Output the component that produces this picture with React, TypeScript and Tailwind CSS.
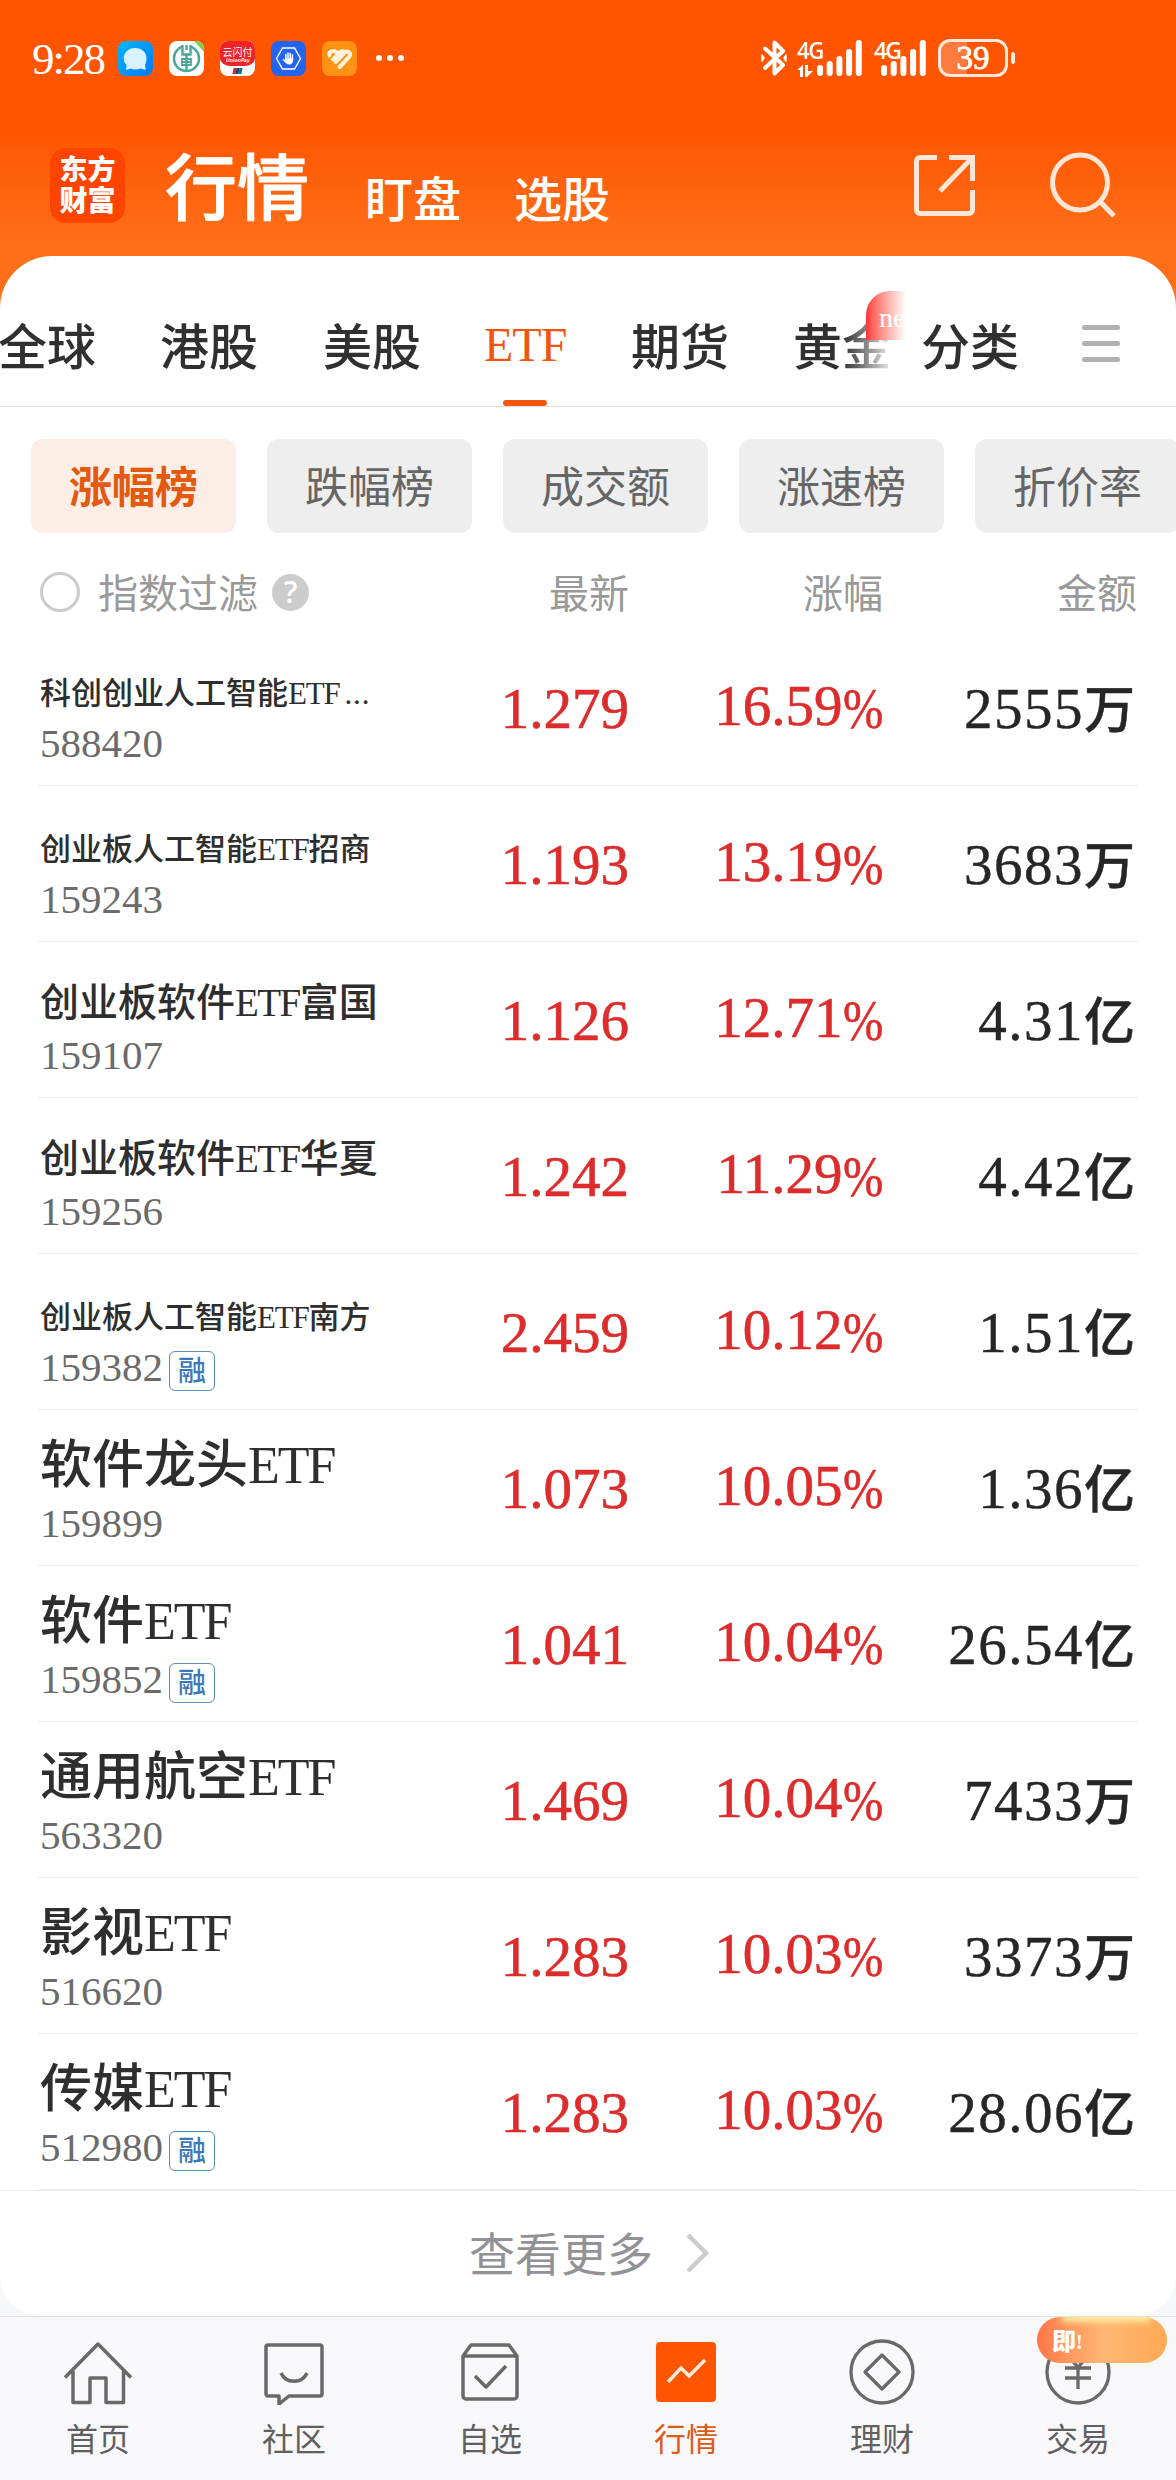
import React from 'react';
import clsx from 'clsx';

interface Fund {
  name: string;
  code: string;
  price: string;
  change: string;
  amount: string;
  unit: string;
  size: 'sm' | 'md' | 'lg';
  margin?: boolean;
}

const funds: Fund[] = [
  { name: '科创创业人工智能ETF...', code: '588420', price: '1.279', change: '16.59', amount: '2555', unit: '万', size: 'sm' },
  { name: '创业板人工智能ETF招商', code: '159243', price: '1.193', change: '13.19', amount: '3683', unit: '万', size: 'sm' },
  { name: '创业板软件ETF富国', code: '159107', price: '1.126', change: '12.71', amount: '4.31', unit: '亿', size: 'md' },
  { name: '创业板软件ETF华夏', code: '159256', price: '1.242', change: '11.29', amount: '4.42', unit: '亿', size: 'md' },
  { name: '创业板人工智能ETF南方', code: '159382', price: '2.459', change: '10.12', amount: '1.51', unit: '亿', size: 'sm', margin: true },
  { name: '软件龙头ETF', code: '159899', price: '1.073', change: '10.05', amount: '1.36', unit: '亿', size: 'lg' },
  { name: '软件ETF', code: '159852', price: '1.041', change: '10.04', amount: '26.54', unit: '亿', size: 'lg', margin: true },
  { name: '通用航空ETF', code: '563320', price: '1.469', change: '10.04', amount: '7433', unit: '万', size: 'lg' },
  { name: '影视ETF', code: '516620', price: '1.283', change: '10.03', amount: '3373', unit: '万', size: 'lg' },
  { name: '传媒ETF', code: '512980', price: '1.283', change: '10.03', amount: '28.06', unit: '亿', size: 'lg', margin: true },
];

const nameSize = {
  sm: 'text-[31px] leading-[36px]',
  md: 'text-[39px] leading-[42px]',
  lg: 'text-[52px] leading-[52px]',
};

function SignalBars() {
  return (
    <svg width="45" height="36" viewBox="0 0 45 36" fill="white">
      <rect x="0" y="25" width="6" height="11" rx="3" />
      <rect x="9.7" y="21" width="6" height="15" rx="3" />
      <rect x="19.4" y="16" width="6" height="20" rx="3" />
      <rect x="29.1" y="9" width="6" height="27" rx="3" />
      <rect x="38.8" y="0" width="6" height="36" rx="3" />
    </svg>
  );
}

function StatusBar() {
  return (
    <div className="flex h-[116px] items-center pl-[32px] text-white">
      <span className="w-[86px] pt-[3px] text-[45px] leading-none tracking-[-2px]">9:28</span>
      <div className="flex items-center gap-4">
        <svg width="35" height="35" viewBox="0 0 35 35">
          <defs>
            <linearGradient id="chat" x1="0" y1="0" x2="1" y2="1">
              <stop offset="0" stopColor="#00b7ff" />
              <stop offset="1" stopColor="#0678f5" />
            </linearGradient>
          </defs>
          <rect width="35" height="35" rx="8" fill="url(#chat)" />
          <path d="M17 7c7 0 11.500 4.500 11.500 10.500 0 3-.8 5-1.500 6.500l.8 5-5.500-1.500c-4 1.500-7 1-9.500 0L8 29l.7-5C6.500 22 5.700 20 5.700 17.500 5.700 11.500 10.500 7 17 7z" fill="#d9f2ff" />
        </svg>
        <svg width="35" height="35" viewBox="0 0 35 35">
          <rect width="35" height="35" rx="8" fill="white" />
          <path d="M25 0h2a8 8 0 0 1 8 8v3z" fill="#7ed04b" />
          <circle cx="17.500" cy="17.500" r="12.500" fill="none" stroke="#4ba899" strokeWidth="2.600" />
          <path d="M17.500 2v8" stroke="white" strokeWidth="9" />
          <path d="M13.500 4v9.500h8V4M17.500 13.500V30M17.500 4v5" fill="none" stroke="#4ba899" strokeWidth="2.400" />
          <path d="M13 18h9v6h-9zM13 21h9" fill="none" stroke="#4ba899" strokeWidth="1.800" />
        </svg>
        <div className="flex h-[35px] w-[35px] flex-col items-center overflow-hidden rounded-lg bg-white">
          <div className="flex h-[25px] w-full shrink-0 flex-col items-center rounded-b-[30%] bg-[#ee2229] pt-[5px] font-['Noto_Sans_CJK_SC',sans-serif]">
            <span className="text-[10px] leading-[11px]">云闪付</span>
            <span className="text-[5px] leading-[6px] font-bold italic">UnionPay</span>
          </div>
          <div className="mt-[2px] flex h-[6px] -skew-x-12">
            <i className="w-[3px] bg-[#d8232a]" />
            <i className="w-[3px] bg-[#1d3d7c]" />
            <i className="w-[3px] bg-[#0b7a77]" />
          </div>
        </div>
        <svg width="35" height="35" viewBox="0 0 35 35">
          <rect width="35" height="35" rx="8" fill="#2364f3" />
          <path d="M11.500 7h12l6 10.500-6 10.500h-12l-6-10.500z" fill="none" stroke="white" strokeWidth="1.300" />
          <path d="M14.800 18v-4.500M17 18v-6M19.200 18v-5.500M21.400 18v-4" stroke="white" strokeWidth="1.500" strokeLinecap="round" />
          <path d="M14 17.500h8.200c.2 3.500-1.200 6-3.700 6-2.800 0-4.500-2-7-5 .8-.8 1.700-.4 2.500.5z" fill="white" />
        </svg>
        <svg width="35" height="35" viewBox="0 0 35 35">
          <rect width="35" height="35" rx="8" fill="#ff9212" />
          <g fill="none" stroke="#fff3dd" strokeWidth="4" strokeLinecap="round">
            <path d="M7.500 14.500c-1-4 4-6 7-3M11 18.500l7-7.500c3-2.500 5 .5 3 2.500L14 21" />
            <path d="M17.500 26 27 16c3-4-1.500-7-5-4.500" />
          </g>
        </svg>
      </div>
      <div className="ml-[19px] flex gap-[5px]">
        <i className="size-[6px] rounded-full bg-white" />
        <i className="size-[6px] rounded-full bg-white" />
        <i className="size-[6px] rounded-full bg-white" />
      </div>
      <svg className="ml-[357px]" width="26" height="36" viewBox="0 0 26 36" fill="none" stroke="white" strokeWidth="4" strokeLinejoin="round" strokeLinecap="round">
        <path d="M4 8.500 22 25l-8.500 8.500v-31L22 11 4 28" />
        <path d="M1 15v6l2-3zM25 15v6l-2-3z" strokeWidth="1.500" fill="white" />
      </svg>
      <div className="ml-[10px] flex h-[36px] items-start">
        <div className="flex w-[20px] flex-col">
          <span className="origin-left scale-x-[0.92] font-['Open_Sans',sans-serif] text-[24px] leading-[20px] font-semibold tracking-[-1.500px]">4G</span>
          <svg className="mt-[5px]" width="17" height="12" viewBox="0 0 17 12" fill="white">
            <path d="M0 5 6 0v12H3V5zM8 0h3v6h5l-6 6H8z" />
          </svg>
        </div>
        <SignalBars />
      </div>
      <div className="ml-[12px] flex h-[36px] items-start">
        <span className="w-[7px] origin-left font-['Open_Sans',sans-serif] text-[23px] leading-[20px] font-semibold tracking-[-2px]">4G</span>
        <SignalBars />
      </div>
      <div className="ml-[12px] flex h-[38px] w-[70px] items-center justify-center rounded-xl border-[3px] border-[#ffeadb] bg-[linear-gradient(90deg,#ff7b3d_40%,transparent_40%)] text-[33px] leading-none [-webkit-text-stroke:0.800px]">
        39
      </div>
      <i className="ml-[3px] h-[12px] w-[4px] rounded-full bg-[#ffeadb]" />
    </div>
  );
}

function Header() {
  return (
    <div className="flex h-[140px] pl-[50px] text-white">
      <div className="mt-[32px] flex size-[75px] flex-col items-center justify-center rounded-2xl bg-[#ff4400] text-[28px] leading-[31px] font-black">
        <span>东方</span>
        <span>财富</span>
      </div>
      <span className="mt-[38px] ml-[40px] text-[72px] leading-[72px] font-medium [-webkit-text-stroke:0.800px]">行情</span>
      <span className="mt-[61px] ml-[56px] text-[48px] leading-[48px] font-medium">盯盘</span>
      <span className="mt-[61px] ml-[53px] text-[48px] leading-[48px] font-medium">选股</span>
      <svg className="mt-[39px] ml-[304px]" width="61" height="61" viewBox="0 0 61 61" fill="none" stroke="#ffe6d6" strokeWidth="5">
        <path d="M23 2.500H6a3.500 3.500 0 0 0-3.500 3.500v49A3.500 3.500 0 0 0 6 58.500h49a3.500 3.500 0 0 0 3.500-3.500V35M35 2.500h23.500V26M57 4 26 36" />
      </svg>
      <svg className="mt-[36px] ml-[75px]" width="67" height="67" viewBox="0 0 67 67" fill="none" stroke="#ffe6d6" strokeWidth="5">
        <circle cx="30" cy="30.500" r="27.500" />
        <path d="M50 49.500 64 64" />
      </svg>
    </div>
  );
}

function Tabs() {
  return (
    <div className="flex h-[151px] shrink-0 border-b border-[#dedede] pt-[68px] text-[49px] leading-[50px] font-medium whitespace-nowrap text-[#303030]">
      <span className="-ml-[2px] w-[162px]">全球</span>
      <span className="w-[163px]">港股</span>
      <span className="w-[161px]">美股</span>
      <div className="relative -mt-[4px] w-[147px] text-[#f0560f]">
        <span className="text-[48px] tracking-[-1px]">ETF</span>
        <i className="absolute top-[80px] left-[19px] h-[6px] w-[44px] rounded-full bg-[#f5560d]" />
      </div>
      <span className="w-[162px]">期货</span>
      <div className="relative w-[128px]">
        <span className="bg-linear-to-r from-[#303030] from-50% to-[#d8d8d8] to-95% bg-clip-text text-transparent">黄金</span>
        <div className="absolute -top-[33px] left-[73px] h-[49px] w-[40px] overflow-hidden rounded-tl-[24px] bg-linear-to-r from-[#ff3038] to-white pl-[13px] text-[28px] leading-[54px] font-normal text-white">
          new
        </div>
      </div>
      <span className="w-[161px]">分类</span>
      <div className="mt-[1px] flex h-[37px] w-[38px] flex-col justify-between">
        <i className="h-[5px] rounded-full bg-[#b0b0b0]" />
        <i className="h-[5px] rounded-full bg-[#b0b0b0]" />
        <i className="h-[5px] rounded-full bg-[#b0b0b0]" />
      </div>
    </div>
  );
}

function Chips() {
  return (
    <div className="flex gap-[31px] overflow-hidden pt-[32px] pl-[31px]">
      {['涨幅榜', '跌幅榜', '成交额', '涨速榜', '折价率'].map((label, i) => (
        <div
          key={label}
          className={clsx(
            'flex h-[94px] w-[205px] shrink-0 items-center justify-center rounded-xl pt-[7px] text-[43px]',
            i === 0 ? 'bg-[#fdeee5] font-bold text-[#e2590f]' : 'bg-[#eeeeee] text-[#666666]',
          )}
        >
          {label}
        </div>
      ))}
    </div>
  );
}

function ListHeader() {
  return (
    <div className="flex h-[97px] items-center pt-[21px] pl-[40px] text-[40px] leading-none text-[#999999]">
      <i className="size-[40px] rounded-full border-[3px] border-[#cccccc]" />
      <span className="ml-[18px] w-[174px] pt-[5px]">指数过滤</span>
      <span className="flex size-[37px] items-center justify-center rounded-full bg-[#cccccc] font-['Open_Sans',sans-serif] text-[30px] font-semibold text-white">?</span>
      <span className="ml-[240px] w-[254px] pt-[5px]">最新</span>
      <span className="w-[254px] pt-[5px]">涨幅</span>
      <span className="pt-[5px]">金额</span>
    </div>
  );
}

function FundName({ name, size }: { name: string; size: Fund['size'] }) {
  // latin runs sit a little tighter than the hanzi around them
  return (
    <div className={clsx('flex h-[82px] items-end whitespace-nowrap text-[#2e2e2e]', nameSize[size])}>
      {name.split(/([A-Z]+|\.+)/).map((part, i) => (
        <span
          key={i}
          className={clsx(
            part.startsWith('.') ? 'pl-[5px] tracking-[0.03em]' : i % 2 === 1 ? 'tracking-[-0.04em]' : 'font-medium',
          )}
        >
          {part}
        </span>
      ))}
    </div>
  );
}

function FundRow({ fund }: { fund: Fund }) {
  return (
    <div className="mx-[38px] flex h-[156px] border-b border-[#ececec] pl-[2px]">
      <div className="w-[390px] shrink-0">
        <FundName name={fund.name} size={fund.size} />
        <div className="mt-[9px] flex h-[44px] items-center">
          <span className="text-[41px] leading-none text-[#6b6b6b]">{fund.code}</span>
          {fund.margin && (
            <span className="mt-[7px] ml-[6px] flex h-[40px] w-[46px] items-center justify-center rounded-md border-[1.500px] border-[#5b8db8] pt-[2px] text-[28px] leading-none font-medium text-[#3b78b8]">融</span>
          )}
        </div>
      </div>
      <div className="mt-[49px] flex shrink-0 items-baseline text-[57px] leading-[60px]">
        <span className="w-[199px] text-right text-[#dd2c2c] [-webkit-text-stroke:0.600px]">{fund.price}</span>
        <span className="relative -top-[3px] w-[254px] text-right text-[#dd2c2c] [-webkit-text-stroke:0.600px]">
          {fund.change}
          <span className="relative top-[3px] -ml-[7px] inline-block origin-right scale-x-[0.85]">%</span>
        </span>
        <span className="w-[252px] text-right whitespace-nowrap text-[#262626] [-webkit-text-stroke:0.400px]">
          <span className="tracking-[1.500px]">{fund.amount}</span>
          <span className="text-[51px] font-medium">{fund.unit}</span>
        </span>
      </div>
    </div>
  );
}

function BottomNav() {
  return (
    <div className="grid h-[164px] grid-cols-6 border-t border-[#e0e0e0] bg-[#f8f8fa] text-[32px] leading-[36px] text-[#606060]">
      <div className="flex flex-col items-center pt-[24px]">
        <svg width="68" height="64" viewBox="0 0 68 64" fill="none" stroke="#696969" strokeWidth="3.500">
          <path d="M1 36.500 34 3l33 33.500M9 30v31.500h17V37h16v24.500h17.500V30" strokeLinejoin="round" />
        </svg>
        <span className="mt-[17px]">首页</span>
      </div>
      <div className="flex flex-col items-center pt-[24px]">
        <svg width="60" height="64" viewBox="0 0 60 64" fill="none" stroke="#696969" strokeWidth="3.500" strokeLinejoin="round">
          <path d="M4 4h52a2 2 0 0 1 2 2v47a2 2 0 0 1-2 2H25l-10 8v-8H4a2 2 0 0 1-2-2V6a2 2 0 0 1 2-2z" />
          <path d="M17 32c5 11 21 11 26 0" />
        </svg>
        <span className="mt-[17px]">社区</span>
      </div>
      <div className="flex flex-col items-center pt-[24px]">
        <svg width="58" height="64" viewBox="0 0 58 64" fill="none" stroke="#696969" strokeWidth="3.500" strokeLinejoin="round">
          <path d="M2 15 10 4h38l8 11v40a3 3 0 0 1-3 3H5a3 3 0 0 1-3-3zM2 15h54M14 35l11 11 20-21" />
        </svg>
        <span className="mt-[17px]">自选</span>
      </div>
      <div className="flex flex-col items-center pt-[24px] text-[#dd5a18]">
        <svg width="60" height="64" viewBox="0 0 60 64" fill="none">
          <rect y="1" width="60" height="60" rx="4" fill="#ff5500" />
          <path d="m12 41 13-14 8 8 16-16" stroke="#ffeadb" strokeWidth="3.500" />
        </svg>
        <span className="mt-[17px]">行情</span>
      </div>
      <div className="flex flex-col items-center pt-[22px]">
        <svg width="66" height="66" viewBox="0 0 66 66" fill="none" stroke="#696969" strokeWidth="3.300" strokeLinejoin="round">
          <circle cx="33" cy="33" r="31" />
          <path d="m33 16 17 17-17 17-17-17z" />
        </svg>
        <span className="mt-[17px]">理财</span>
      </div>
      <div className="relative flex flex-col items-center pt-[22px]">
        <svg width="66" height="66" viewBox="0 0 66 66" fill="none" stroke="#696969" strokeWidth="3.300">
          <circle cx="33" cy="33" r="31" />
          <path d="M21 15l12 13 12-13M33 28v22M20 29h26M20 39h26" />
        </svg>
        <span className="mt-[17px]">交易</span>
        <div className="absolute top-0 right-[9px] flex h-[46px] w-[130px] items-center overflow-hidden rounded-full bg-linear-to-r from-[#ff7647] via-[#ffb674] via-50% to-[#ffa953] pt-[4px] pl-[15px] text-[24px] leading-none font-black text-white">
          即
          <span className="text-[20px]">!</span>
          <i className="absolute -top-[4px] left-[24px] h-[9px] w-[90px] rounded-full bg-[#fff0a0] blur-[3px]" />
        </div>
      </div>
    </div>
  );
}

export default function App() {
  return (
    <div className="h-[2480px] w-[1176px] overflow-hidden bg-[#f5f7fa] font-['Liberation_Serif','Noto_Sans_CJK_SC',serif]">
      <div className="bg-linear-to-b from-[#ff5500] from-32% to-[#ff6f18] to-60%">
        <StatusBar />
        <Header />
        <div className="h-[151px] rounded-t-[52px] bg-white">
          <Tabs />
        </div>
      </div>
      <div className="rounded-b-[40px] bg-white pb-px">
        <Chips />
        <ListHeader />
        {funds.map((fund) => (
          <FundRow key={fund.code} fund={fund} />
        ))}
        <div className="flex h-[125px] items-center border-t border-[#ececec] pl-[469px] text-[46px] leading-none text-[#929296]">
          <span className="pt-[5px]">查看更多</span>
          <svg className="ml-[33px]" width="24" height="40" viewBox="0 0 24 40" fill="none" stroke="#cccccc" strokeWidth="4.500">
            <path d="m2 2 18 18L2 38" />
          </svg>
        </div>
      </div>
      <BottomNav />
    </div>
  );
}
